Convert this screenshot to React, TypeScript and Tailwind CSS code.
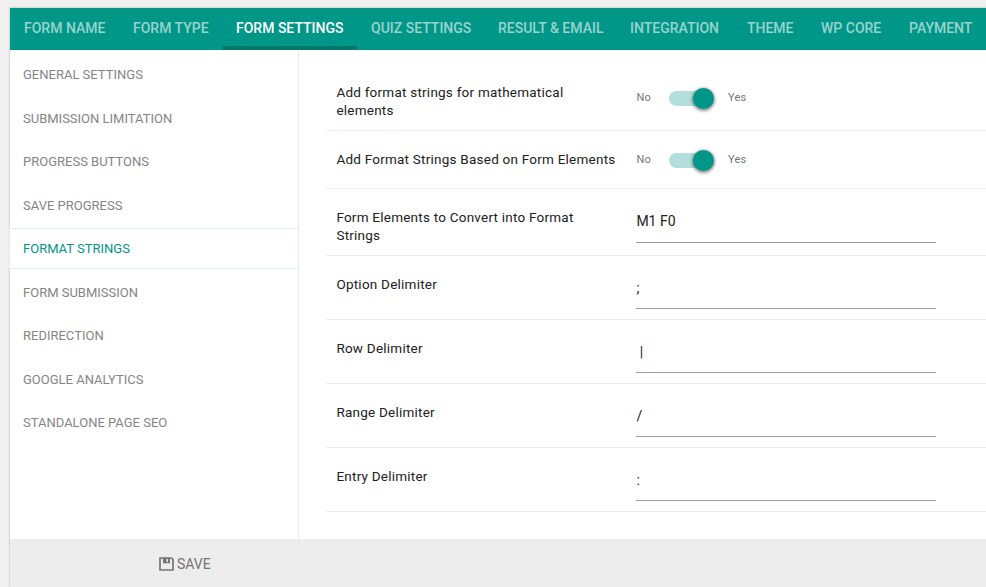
import type { ReactNode } from "react";

const tabs = [
  { label: "FORM NAME", width: "w-[109px]" },
  { label: "FORM TYPE", width: "w-[103px]" },
  { label: "FORM SETTINGS", width: "w-[135px]" },
  { label: "QUIZ SETTINGS", width: "w-[127px]" },
  { label: "RESULT & EMAIL", width: "w-[132px]" },
  { label: "INTEGRATION", width: "w-[117px]" },
  { label: "THEME", width: "w-[74px]" },
  { label: "WP CORE", width: "w-[88px]" },
  { label: "PAYMENT", width: "w-[91px]" },
];

const menu = [
  "GENERAL SETTINGS",
  "SUBMISSION LIMITATION",
  "PROGRESS BUTTONS",
  "SAVE PROGRESS",
  "FORMAT STRINGS",
  "FORM SUBMISSION",
  "REDIRECTION",
  "GOOGLE ANALYTICS",
  "STANDALONE PAGE SEO",
];

const delimiters = [
  { label: "Option Delimiter", value: ";" },
  { label: "Row Delimiter", value: " |" },
  { label: "Range Delimiter", value: "/" },
  { label: "Entry Delimiter", value: ":" },
];

function Toggle() {
  return (
    <div className="flex items-center text-[11px] leading-[15px] text-[#757575]">
      <span className="w-[33px] -translate-y-px pl-[0.5px] tracking-[0.2px]">No</span>
      <span className="flex h-[15px] w-10 items-center rounded-full bg-[#b2dfdb]">
        <span className="ml-6 size-[21px] shrink-0 rounded-full bg-[#009688] shadow-[0_1px_3px_1px_rgba(0,0,0,0.4)]" />
      </span>
      <span className="ml-[19px] -translate-y-px tracking-[0.2px]">Yes</span>
    </div>
  );
}

function Field({ value, className }: { value: string; className: string }) {
  return (
    <div
      className={`flex h-[43px] w-[300px] items-center whitespace-pre border-b border-[#9e9e9e] pl-[0.4px] text-sm ${className}`}
    >
      {value}
    </div>
  );
}

function Row({ label, size, children }: { label: string; size: string; children: ReactNode }) {
  return (
    <div className={`flex border-b border-[#eee] pl-[10px] ${size}`}>
      <div className="w-[300px] shrink-0 pr-[19px] pl-[0.4px] text-[13.5px] leading-[18px] tracking-[0.23px]">
        {label}
      </div>
      {children}
    </div>
  );
}

export default function App() {
  return (
    <div className="h-[587px] w-[986px] overflow-hidden bg-[#f0f0f0] pt-2 pl-[10px] font-[Roboto,sans-serif] text-[#212121]">
      <div className="flex h-[579px] w-[976px] flex-col bg-white shadow-[0_0_2px_rgba(0,0,0,0.3)]">
        <nav className="flex h-[42px] shrink-0 bg-[#009688] text-sm font-medium">
          {tabs.map((t) => (
            <div
              key={t.label}
              className={`flex shrink-0 items-center whitespace-nowrap pl-[14px] ${t.width} ${
                t.label === "FORM SETTINGS"
                  ? "border-b-4 border-[#00796b] pt-px text-white"
                  : "pb-[3px] text-white/60"
              }`}
            >
              {t.label}
            </div>
          ))}
        </nav>
        <div className="flex h-[489px] shrink-0">
          <aside className="flex w-[289px] shrink-0 flex-col gap-[2.5px] border-r border-[#eee] pt-[4.3px] text-[13px] text-[#858585]">
            {menu.map((m) => (
              <div
                key={m}
                className={`-mr-px -ml-px flex h-[41px] shrink-0 items-center border pl-[13px] ${
                  m === "FORMAT STRINGS" ? "border-[#dff2ef] text-[#009688]" : "border-transparent"
                }`}
              >
                {m}
              </div>
            ))}
          </aside>
          <main className="ml-[27px] flex-1">
            <Row label="Add format strings for mathematical elements" size="h-[81px] pt-[33px]">
              <div className="pt-2">
                <Toggle />
              </div>
            </Row>
            <Row label="Add Format Strings Based on Form Elements" size="h-[58px] pt-[19px]">
              <div className="pt-[3px]">
                <Toggle />
              </div>
            </Row>
            <Row label="Form Elements to Convert into Format Strings" size="h-[67px] pt-[19px]">
              <Field value="M1 F0" className="-mt-2" />
            </Row>
            {delimiters.map((d) => (
              <Row key={d.label} label={d.label} size="h-[64px] pt-[19px]">
                <Field value={d.value} className="-mt-[9px] pt-px" />
              </Row>
            ))}
          </main>
        </div>
        <footer className="flex h-12 shrink-0 items-center bg-[#ededed] pl-[149px] text-sm text-[#757575]">
          <svg className="mt-[2px]" width="15" height="14" viewBox="0 0 15 14" fill="none">
            <path d="M1 1H12.5L14 2.5V13H1Z" stroke="#757575" strokeWidth="1.7" />
            <path fillRule="evenodd" d="M4 1H11V6.2H4ZM7.5 2V5H9V2Z" fill="#757575" />
          </svg>
          <span className="ml-[3px] pt-[2px]">SAVE</span>
        </footer>
      </div>
    </div>
  );
}
